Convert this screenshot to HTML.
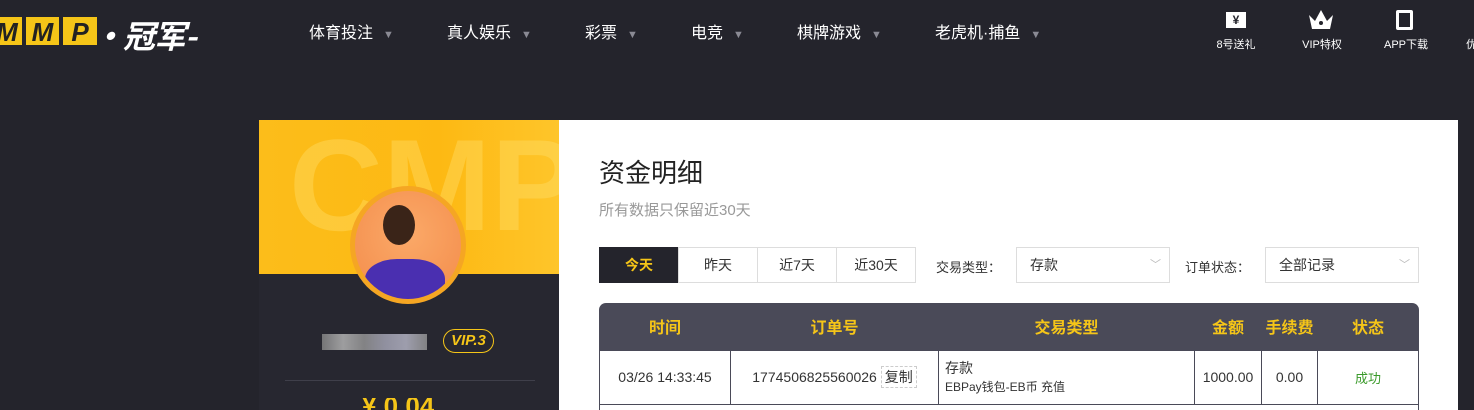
<!DOCTYPE html>
<html style="height:410px;overflow:hidden"><head><meta charset="utf-8"><style>
*{margin:0;padding:0;box-sizing:border-box}
body{width:1474px;height:410px;overflow:hidden;background:#24242c;font-family:"Liberation Sans","Noto Sans CJK SC",sans-serif}
#w{position:relative;width:1474px;height:410px;overflow:hidden}
.a{position:absolute}
.nav{color:#fff;font-size:16px;top:19px}
.nav span{color:#8a8a94;font-size:11px;margin-left:10px}
.ic{color:#fff;font-size:11px;top:36px;text-align:center}
.btn{position:absolute;top:247px;height:36px;border:1px solid #ddd;font-size:14px;color:#333;text-align:center;line-height:34px;background:#fff}
table{position:absolute;left:599px;top:303px;width:820px;border-collapse:collapse;font-size:14px;color:#333}
th{color:#f5c518;height:47px;font-size:16px;font-weight:bold}
td{border:1px solid #4a4a58;height:54px;text-align:center;background:#fff}
</style></head><body><div id="w">
<div class="a" style="left:-8px;top:17px;font:italic bold 26px 'Liberation Sans';color:#222">
<span style="display:inline-block;background:#f5c518;width:30px;height:28px;text-align:center">M</span><span style="display:inline-block;background:#f5c518;width:33px;height:28px;margin-left:4px;text-align:center">M</span><span style="display:inline-block;background:#f5c518;width:34px;height:28px;margin-left:4px;text-align:center">P</span></div>
<div class="a" style="left:92px;top:12px;color:#fff;font:italic bold 32px 'Noto Sans CJK SC',sans-serif;letter-spacing:-1px">·冠军-</div>
<div class="a nav" style="left:309px">体育投注<span>▼</span></div>
<div class="a nav" style="left:447px">真人娱乐<span>▼</span></div>
<div class="a nav" style="left:585px">彩票<span>▼</span></div>
<div class="a nav" style="left:691px">电竞<span>▼</span></div>
<div class="a nav" style="left:797px">棋牌游戏<span>▼</span></div>
<div class="a nav" style="left:935px">老虎机·捕鱼<span>▼</span></div>
<div class="a" style="left:1226px;top:12px;width:20px;height:16px;background:#fff;color:#24242c;font-size:12px;text-align:center;line-height:16px;font-weight:bold">¥</div>
<svg class="a" style="left:1307px;top:7px" width="28" height="24"><path d="M2 8 L8 14 L14 3 L20 14 L26 8 L23 22 L5 22Z" fill="#fff"/><circle cx="14" cy="16" r="2" fill="#24242c"/></svg>
<div class="a" style="left:1396px;top:10px;width:17px;height:20px;border:3px solid #fff;border-radius:2px"></div>
<div class="a ic" style="left:1210px;width:52px">8号送礼</div>
<div class="a ic" style="left:1294px;width:56px">VIP特权</div>
<div class="a ic" style="left:1378px;width:56px">APP下载</div>
<div class="a ic" style="left:1466px">优</div>

<div class="a" style="left:259px;top:120px;width:300px;height:290px;background:#272730"></div>
<div class="a" style="left:259px;top:120px;width:300px;height:154px;background:linear-gradient(90deg,#fcbd1a,#fdb913 60%,#fec52a);overflow:hidden"><div style="position:absolute;left:30px;top:-10px;font:bold 130px 'Liberation Sans';color:rgba(255,230,120,.35)">CMP</div></div>
<div class="a" style="left:350px;top:186px;width:116px;height:118px;border-radius:50%;background:#f5a623;padding:5px"><div style="width:100%;height:100%;border-radius:50%;background:radial-gradient(circle at 50% 40%,#fba968,#f38b4a);overflow:hidden;position:relative"><div style="position:absolute;left:28px;top:14px;width:32px;height:40px;border-radius:50%;background:#3a2418"></div><div style="position:absolute;left:10px;top:68px;width:80px;height:50px;border-radius:40% 40% 0 0;background:#4a2fb0"></div></div></div>
<div class="a" style="left:322px;top:334px;width:105px;height:16px;background:linear-gradient(90deg,#888,#bbb,#999,#aab,#bbc,#999);opacity:.8"></div>
<div class="a" style="left:443px;top:329px;width:51px;height:24px;border:1.5px solid #f5c518;border-radius:12px;color:#f5c518;font:italic bold 15px 'Liberation Sans';text-align:center;line-height:21px">VIP.3</div>
<div class="a" style="left:285px;top:380px;width:250px;height:1px;background:#3f3f4a"></div>
<div class="a" style="left:362px;top:398px;color:#f5c518;font-size:26px;font-weight:bold;line-height:12px;height:12px;overflow:hidden;padding-top:2px">¥ 0.04</div>

<div class="a" style="left:559px;top:120px;width:899px;height:290px;background:#fff"></div>
<div class="a" style="left:599px;top:153px;font-size:26px;color:#222">资金明细</div>
<div class="a" style="left:599px;top:199px;font-size:15px;color:#999">所有数据只保留近30天</div>
<div class="btn" style="left:599px;width:80px;background:#24242c;border-color:#24242c;color:#f5c518;font-weight:bold">今天</div>
<div class="btn" style="left:678px;width:80px">昨天</div>
<div class="btn" style="left:757px;width:80px">近7天</div>
<div class="btn" style="left:836px;width:80px">近30天</div>
<div class="a" style="left:936px;top:257px;font-size:13px;color:#333">交易类型：</div>
<div class="btn" style="left:1016px;width:154px;text-align:left;padding-left:13px">存款<span style="position:absolute;right:8px;color:#bbb;font-size:11px">﹀</span></div>
<div class="a" style="left:1185px;top:257px;font-size:13px;color:#333">订单状态：</div>
<div class="btn" style="left:1265px;width:154px;text-align:left;padding-left:13px">全部记录<span style="position:absolute;right:8px;color:#bbb;font-size:11px">﹀</span></div>
<div class="a" style="left:599px;top:303px;width:820px;height:48px;background:#4a4a58;border-radius:7px 7px 0 0"></div>
<table><tr><th style="width:131px">时间</th><th style="width:208px">订单号</th><th style="width:256px">交易类型</th><th style="width:67px">金额</th><th style="width:56px">手续费</th><th>状态</th></tr>
<tr><td>03/26 14:33:45</td><td>1774506825560026 <span style="border:1px dashed #ccc;padding:2px 3px">复制</span></td><td style="text-align:left;padding-left:6px;line-height:18px">存款<br><span style="font-size:12px">EBPay钱包-EB币 充值</span></td><td>1000.00</td><td>0.00</td><td style="color:#3a9a2a;font-size:13px">成功</td></tr>
</table>
<div class="a" style="left:599px;top:404px;width:820px;height:6px;border:1px solid #4a4a58;border-bottom:0"></div>
</div></body></html>
